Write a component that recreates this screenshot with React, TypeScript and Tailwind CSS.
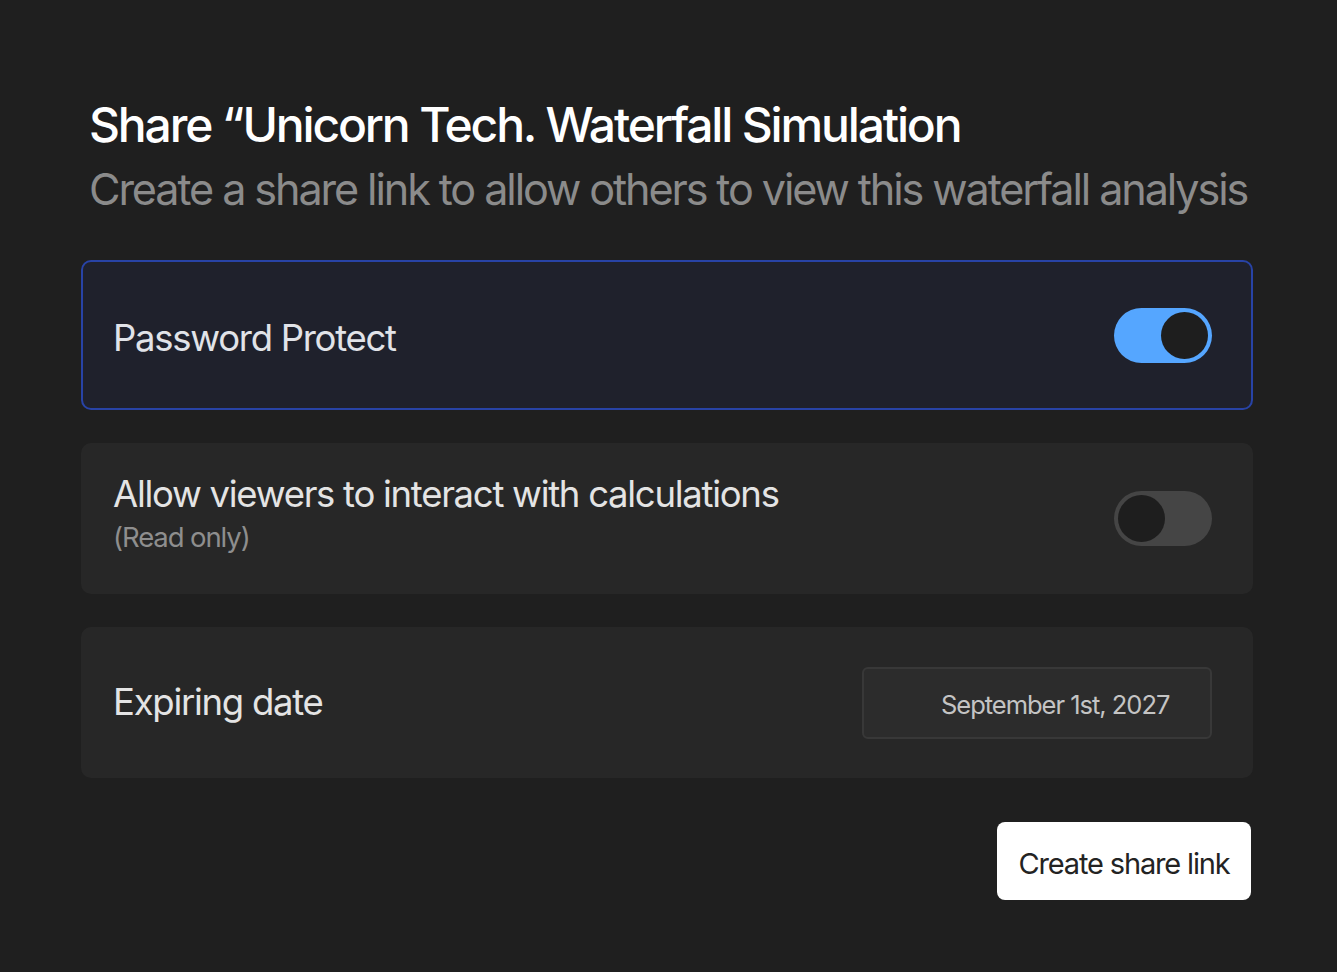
import React from "react";

const Toggle = ({ on }: { on: boolean }) => {
  return (
    <div
      className={
        on
          ? "w-[98px] h-[55px] rounded-full bg-[#55a6ff] flex items-center justify-end pr-[4px]"
          : "w-[98px] h-[55px] rounded-full bg-[#454545] flex items-center justify-start pl-[4px]"
      }
    >
      <div className="w-[47px] h-[47px] rounded-full bg-[#1e1e1e]" />
    </div>
  );
};

export default function App() {
  return (
    <div
      className="min-h-[972px] w-full bg-[#1f1f1f] pl-[81px] pr-[84px] pt-[96px] flex flex-col"
      style={{ fontFamily: "Inter, 'Noto Sans', sans-serif" }}
    >
      <div className="pl-[8px]">
        <h1 className="text-[48px] leading-[58px] font-medium text-white tracking-[-0.045em]">
          Share “Unicorn Tech. Waterfall Simulation
        </h1>
        <p className="mt-[10px] text-[43.2px] leading-[50px] text-[#8b8b8b] tracking-[-0.049em] whitespace-nowrap">
          Create a share link to allow others to view this waterfall analysis
        </p>
      </div>

      <div className="mt-[46px] flex flex-col gap-[33px]">
        <div className="h-[150px] rounded-[10px] border-2 border-[#2843a6] bg-[#1f212c] flex items-center justify-between pl-[30px] pr-[39px]">
          <span className="pt-[6px] text-[36.5px] text-[#e1e3e8] tracking-[-0.035em]">
            Password Protect
          </span>
          <Toggle on={true} />
        </div>

        <div className="h-[151px] rounded-[10px] bg-[#272727] flex items-center justify-between pl-[32px] pr-[41px]">
          <div className="flex flex-col mb-[7px]">
            <span className="text-[36.5px] leading-[44px] text-[#e4e4e4] tracking-[-0.035em]">
              Allow viewers to interact with calculations
            </span>
            <span className="text-[27.5px] leading-[42px] text-[#8e8e8e] tracking-[-0.04em]">
              (Read only)
            </span>
          </div>
          <Toggle on={false} />
        </div>

        <div className="h-[151px] rounded-[10px] bg-[#272727] flex items-center justify-between pl-[32px] pr-[41px]">
          <span className="text-[36.5px] text-[#e4e4e4] tracking-[-0.035em]">
            Expiring date
          </span>
          <div className="w-[350px] h-[72px] rounded-[6px] border-2 border-[#383838] bg-[#2c2c2c] flex items-center pl-[77px]">
            <span className="pt-[5px] text-[25.5px] text-[#c4c4c4] tracking-[-0.04em]">
              September 1st, 2027
            </span>
          </div>
        </div>
      </div>

      <div className="mt-[44px] flex justify-end pr-[2px]">
        <button className="w-[254px] h-[78px] rounded-[8px] bg-white text-[#232323] text-[29px] tracking-[-0.04em] flex items-center justify-center pt-[6px]">
          Create share link
        </button>
      </div>
    </div>
  );
}
